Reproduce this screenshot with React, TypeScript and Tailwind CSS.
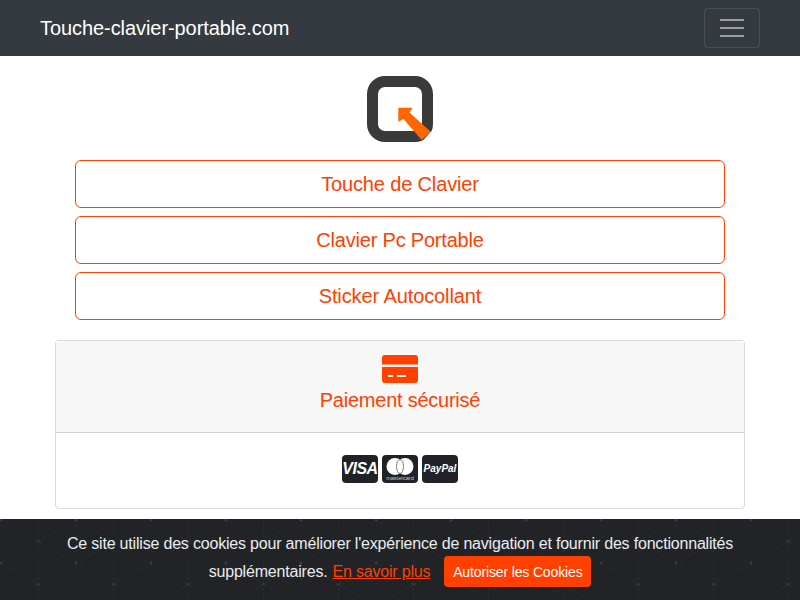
import React from "react";

function Logo() {
  return (
    <svg width="68" height="66" viewBox="0 0 68 66" className="block">
      <rect x="6.500" y="5.500" width="55" height="55" rx="12.500" fill="none" stroke="#3a3a3a" strokeWidth="11" />
      <path d="M64.700 55.700H68V66H55.700z" fill="#fff" />
      <path d="M32.300 31.700H46.700L43.500 36.500L64.700 55.700L55.700 64L37.500 43L32.300 45.700z" fill="#ff6600" />
    </svg>
  );
}

function CreditCard() {
  return (
    <svg width="36" height="28" viewBox="0 0 36 28" className="block">
      <path d="M3 0h30a3 3 0 0 1 3 3v6.500H0V3a3 3 0 0 1 3-3z" fill="#ff4000" />
      <path d="M0 12h36v13a3 3 0 0 1-3 3H3a3 3 0 0 1-3-3z" fill="#ff4000" />
      <rect x="6" y="20" width="5" height="2" fill="#fff" />
      <rect x="15" y="20" width="9" height="2" fill="#fff" />
    </svg>
  );
}

function PayBadge({ children }: { children: React.ReactNode }) {
  return (
    <div className="w-9 h-7 rounded bg-[#202227] flex items-center justify-center overflow-hidden">
      {children}
    </div>
  );
}

function CookiePattern() {
  return (
    <svg className="absolute inset-0 w-full h-full" aria-hidden="true">
      <defs>
        <pattern id="hex" x="1" y="1" width="75" height="43" patternUnits="userSpaceOnUse">
          <path
            d="M0 0V43M37.500 0V43M0 0L75 43M75 0L0 43"
            fill="none"
            stroke="#fff"
            strokeOpacity="0.05"
            strokeDasharray="2 3"
          />
          <circle cx="37.500" cy="21.500" r="1.500" fill="#fff" fillOpacity="0.06" />
          <circle cx="0" cy="0" r="1.500" fill="#fff" fillOpacity="0.06" />
          <circle cx="75" cy="0" r="1.500" fill="#fff" fillOpacity="0.06" />
          <circle cx="0" cy="43" r="1.500" fill="#fff" fillOpacity="0.06" />
          <circle cx="75" cy="43" r="1.500" fill="#fff" fillOpacity="0.06" />
        </pattern>
      </defs>
      <rect width="100%" height="100%" fill="url(#hex)" />
    </svg>
  );
}

const links = [
  { label: "Touche de Clavier", tracking: "tracking-[-0.15px]" },
  { label: "Clavier Pc Portable", tracking: "tracking-[-0.2px]" },
  { label: "Sticker Autocollant", tracking: "tracking-[-0.1px]" },
];

export default function App() {
  return (
    <div className="min-h-[600px] bg-white font-['Liberation_Sans',sans-serif] text-[16px] text-[#212529]">
      {/* Navbar */}
      <nav className="h-14 bg-[#343a40] px-10 flex items-center justify-between">
        <a className="text-xl text-white tracking-[-0.07px]">Touche-clavier-portable.com</a>
        <button className="w-14 h-10 border border-white/10 rounded flex flex-col gap-1.5 items-center justify-center">
          <span className="w-6 h-0.5 bg-white/50" />
          <span className="w-6 h-0.5 bg-white/50" />
          <span className="w-6 h-0.5 bg-white/50" />
        </button>
      </nav>

      <main className="px-[55px]">
        <div className="flex justify-center pt-5 pb-[18px]">
          <Logo />
        </div>

        {/* Category links */}
        <div className="px-5 flex flex-col gap-2">
          {links.map((link) => (
            <a
              key={link.label}
              className={`h-12 border border-[#ff4000] rounded-md flex items-center justify-center text-xl text-[#ff4000] ${link.tracking}`}
            >
              {link.label}
            </a>
          ))}
        </div>

        {/* Payment card */}
        <div className="mt-5 border border-black/15 rounded">
          <div className="h-[92px] bg-[#f7f7f7] border-b border-black/15 flex flex-col items-center pt-[14px]">
            <CreditCard />
            <div className="text-xl text-[#ff4000] mt-[3px] tracking-[-0.24px]">Paiement sécurisé</div>
          </div>
          <div className="h-[75px] flex justify-center gap-1 pt-[22px]">
            <PayBadge>
              <span className="text-[16px] leading-none font-bold italic text-white tracking-[-0.5px]">VISA</span>
            </PayBadge>
            <PayBadge>
              <svg width="36" height="28" viewBox="0 0 36 28">
                <circle cx="13" cy="11.500" r="8.500" fill="#fff" />
                <circle cx="23" cy="11.500" r="8.500" fill="#fff" />
                <ellipse cx="18" cy="11.500" rx="3.500" ry="7" fill="#fff" stroke="#5a5d66" strokeWidth="0.800" />
                <text x="18" y="25" textAnchor="middle" fontSize="5.500" fill="#c8c9cc">mastercard</text>
              </svg>
            </PayBadge>
            <PayBadge>
              <span className="text-[10px] leading-none font-bold italic text-white">PayPal</span>
            </PayBadge>
          </div>
        </div>
      </main>

      {/* Cookie banner */}
      <div className="fixed left-0 right-0 bottom-0 h-[81px] bg-[#212327] text-[#e9ecef] overflow-hidden">
        <CookiePattern />
        <div className="relative px-10 pt-[11px] text-center leading-[28px] tracking-[-0.19px]">
          <div>Ce site utilise des cookies pour améliorer l'expérience de navigation et fournir des fonctionnalités</div>
          <div className="flex items-center justify-center -mt-0.5">
            <span>supplémentaires.</span>
            <a className="ml-[5px] underline text-[#ff4000]">En savoir plus</a>
            <button className="ml-[14px] w-[147px] h-[31px] rounded bg-[#ff4000] text-white text-sm tracking-[-0.14px]">
              Autoriser les Cookies
            </button>
          </div>
        </div>
      </div>
    </div>
  );
}
